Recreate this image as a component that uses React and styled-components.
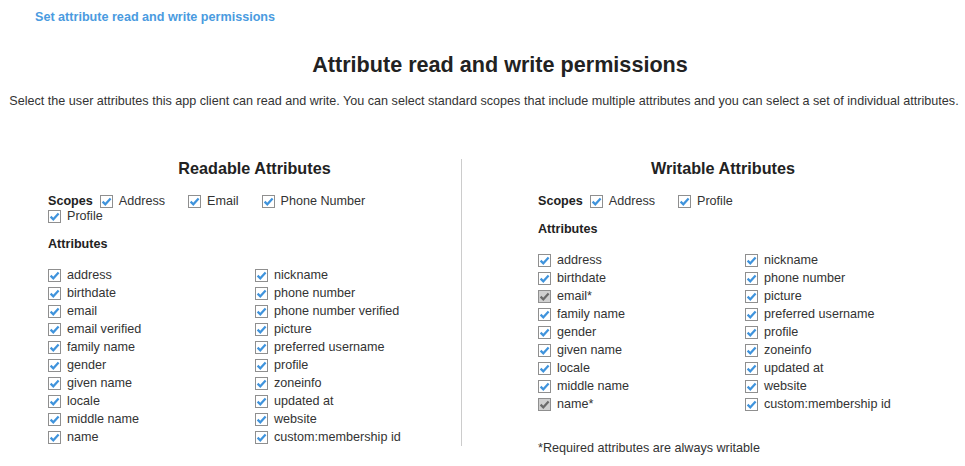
import React from 'react';
import styled, { createGlobalStyle } from 'styled-components';

const GlobalStyle = createGlobalStyle`
    body {
        margin: 0;
        background: #ffffff;
        font-family: 'Liberation Sans', Arial, sans-serif;
        color: #333333;
    }
`;

const Page = styled.div`
    width: 965px;
    padding-top: 8px;
`;

const TopLink = styled.a`
    display: block;
    padding-left: 35px;
    font-size: 12.6px;
    line-height: 18px;
    font-weight: bold;
    color: #4a9be0;
    text-decoration: none;
    cursor: pointer;
`;

const Title = styled.h1`
    margin: 26px 0 0;
    padding-left: 35px;
    font-size: 21.6px;
    line-height: 26px;
    font-weight: bold;
    color: #222222;
    text-align: center;
`;

const Subtitle = styled.p`
    margin: 15px 0 0;
    padding-left: 3px;
    font-size: 12.6px;
    line-height: 16px;
    text-align: center;
`;

const Panels = styled.div`
    display: flex;
    align-items: flex-start;
    margin-top: 50px;
`;

const Panel = styled.section`
    box-sizing: content-box;
    width: ${(p) => p.width}px;
    padding-left: ${(p) => p.inset}px;
    border-right: ${(p) => (p.divider ? '1px solid #cccccc' : 'none')};
`;

const PanelTitle = styled.h2`
    margin: 0;
    font-size: 16.2px;
    line-height: 18px;
    font-weight: bold;
    color: #222222;
    text-align: center;
`;

const Scopes = styled.div`
    display: flex;
    flex-wrap: wrap;
    align-items: center;
    max-width: 380px;
    margin-top: 16.5px;
    font-size: 12.6px;
    line-height: 15px;
`;

const ScopesLabel = styled.span`
    font-weight: bold;
    color: #222222;
    margin-right: 7px;
`;

const ScopeItem = styled.label`
    display: flex;
    align-items: center;
    gap: 6px;
    margin-right: 23px;
`;

const SectionLabel = styled.div`
    margin-top: 13px;
    font-size: 12.6px;
    line-height: 15px;
    font-weight: bold;
    color: #222222;
`;

const AttributeGrid = styled.div`
    display: grid;
    grid-template-columns: 207px 207px;
    grid-template-rows: repeat(${(p) => p.rows}, 18px);
    grid-auto-flow: column;
    margin-top: 14.5px;
    font-size: 12.6px;
`;

const AttributeItem = styled.label`
    display: flex;
    align-items: center;
    gap: 6px;
    white-space: nowrap;
`;

const Box = styled.span`
    box-sizing: border-box;
    display: inline-flex;
    align-items: center;
    justify-content: center;
    flex: none;
    width: 13px;
    height: 13px;
    border: 1px solid #8f8f8f;
    background: ${(p) => (p.locked ? '#d0d0d0' : '#ffffff')};
`;

const Footnote = styled.p`
    margin: 27.5px 0 0;
    font-size: 12.6px;
    line-height: 15px;
`;

const Checkbox = ({ locked }) => (
    <Box locked={locked}>
        <svg width="11" height="11" viewBox="0 0 11 11">
            <path
                d="M1.6 5.6 L4.3 8.3 L9.6 2.6"
                fill="none"
                stroke={locked ? '#6b6b6b' : '#3f93dc'}
                strokeWidth="2.2"
            />
        </svg>
    </Box>
);

const Scope = ({ label }) => (
    <ScopeItem>
        <Checkbox />
        {label}
    </ScopeItem>
);

const Attribute = ({ label, locked }) => (
    <AttributeItem>
        <Checkbox locked={locked} />
        {locked ? `${label}*` : label}
    </AttributeItem>
);

const readable = [
    'address',
    'birthdate',
    'email',
    'email verified',
    'family name',
    'gender',
    'given name',
    'locale',
    'middle name',
    'name',
    'nickname',
    'phone number',
    'phone number verified',
    'picture',
    'preferred username',
    'profile',
    'zoneinfo',
    'updated at',
    'website',
    'custom:membership id',
];

const writable = [
    'address',
    'birthdate',
    'email',
    'family name',
    'gender',
    'given name',
    'locale',
    'middle name',
    'name',
    'nickname',
    'phone number',
    'picture',
    'preferred username',
    'profile',
    'zoneinfo',
    'updated at',
    'website',
    'custom:membership id',
];

const required = ['email', 'name'];

const App = () => (
    <Page>
        <GlobalStyle />
        <TopLink>Set attribute read and write permissions</TopLink>
        <Title>Attribute read and write permissions</Title>
        <Subtitle>
            Select the user attributes this app client can read and write. You can select standard scopes
            that include multiple attributes and you can select a set of individual attributes.
        </Subtitle>
        <Panels>
            <Panel width={413} inset={48} divider>
                <PanelTitle>Readable Attributes</PanelTitle>
                <Scopes>
                    <ScopesLabel>Scopes</ScopesLabel>
                    <Scope label="Address" />
                    <Scope label="Email" />
                    <Scope label="Phone Number" />
                    <Scope label="Profile" />
                </Scopes>
                <SectionLabel>Attributes</SectionLabel>
                <AttributeGrid rows={10}>
                    {readable.map((a) => (
                        <Attribute key={a} label={a} />
                    ))}
                </AttributeGrid>
            </Panel>
            <Panel width={370} inset={76}>
                <PanelTitle>Writable Attributes</PanelTitle>
                <Scopes>
                    <ScopesLabel>Scopes</ScopesLabel>
                    <Scope label="Address" />
                    <Scope label="Profile" />
                </Scopes>
                <SectionLabel>Attributes</SectionLabel>
                <AttributeGrid rows={9}>
                    {writable.map((a) => (
                        <Attribute key={a} label={a} locked={required.includes(a)} />
                    ))}
                </AttributeGrid>
                <Footnote>*Required attributes are always writable</Footnote>
            </Panel>
        </Panels>
    </Page>
);

export default App;
